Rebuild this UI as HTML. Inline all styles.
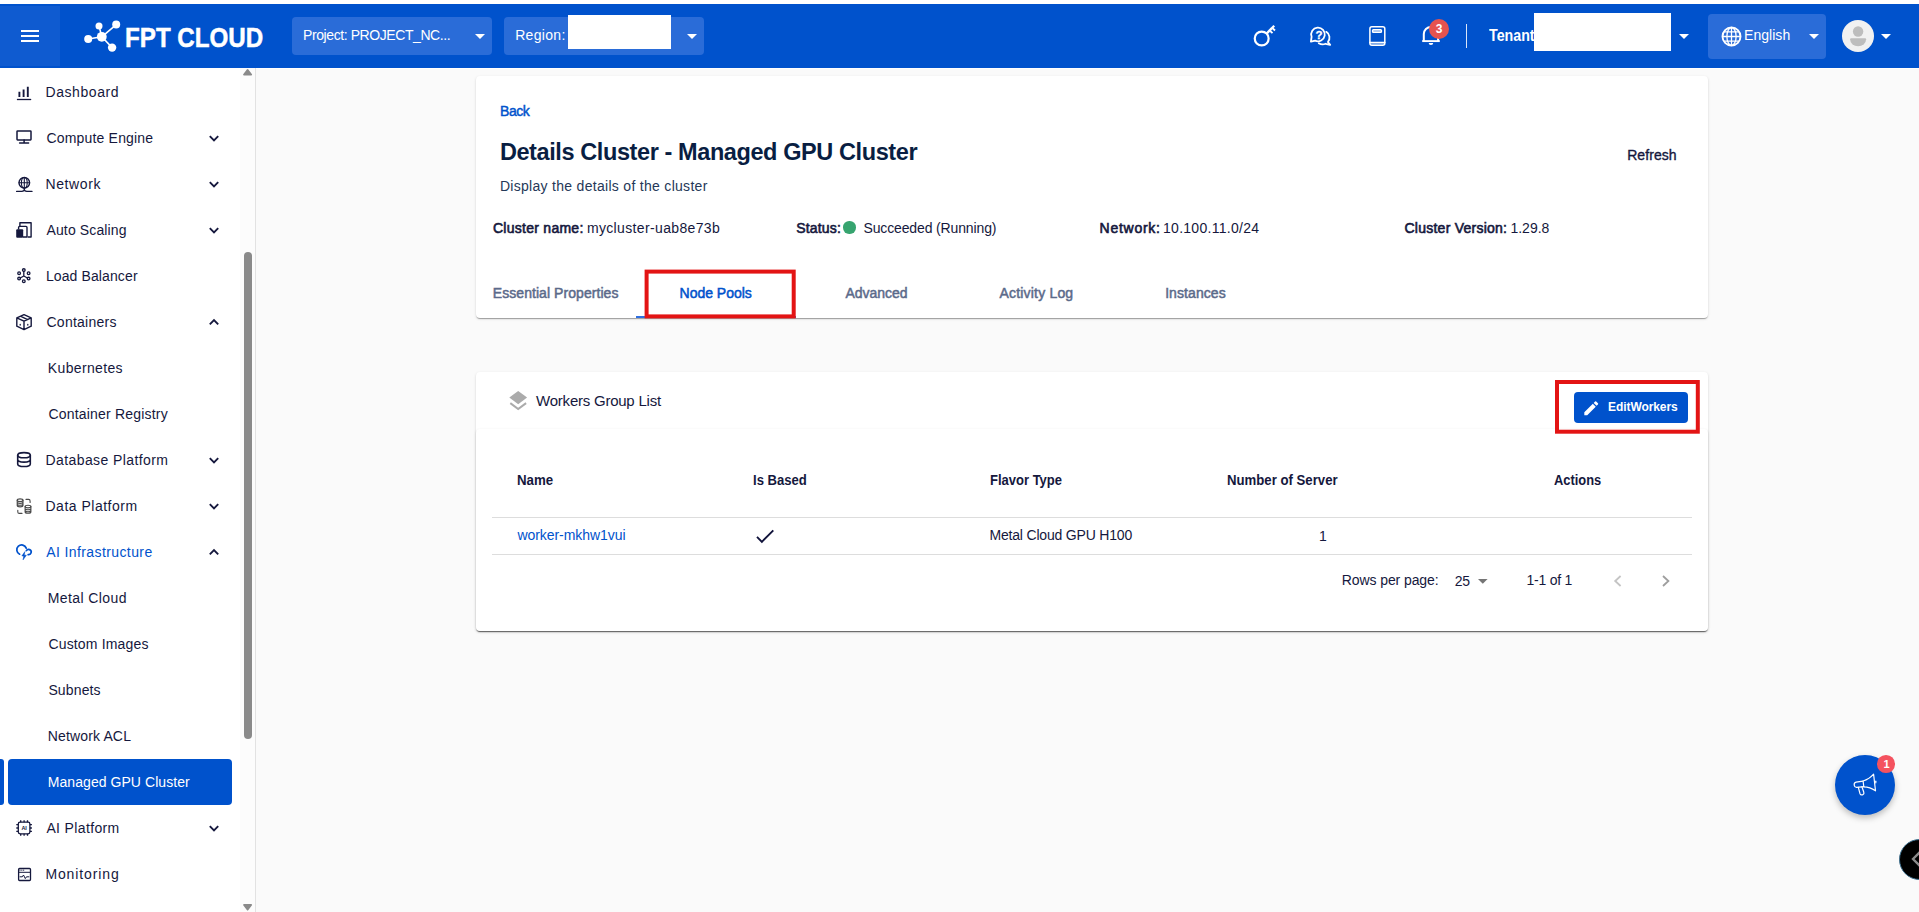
<!DOCTYPE html>
<html lang="en">
<head>
<meta charset="utf-8">
<title>FPT Cloud - Details Cluster - Managed GPU Cluster</title>
<style>
*{box-sizing:border-box;margin:0;padding:0}
html,body{width:1919px;height:912px;overflow:hidden;background:#fff}
body{position:relative;font-family:"Liberation Sans",sans-serif;color:#15183D}
.a{position:absolute}
.t{position:absolute;white-space:nowrap;display:block}
svg{position:absolute;overflow:visible}
#main{left:256px;top:68px;width:1663px;height:844px;background:#FAFAFA}
#hdr{left:0;top:4px;width:1919px;height:64px;background:#0052CC}
#burger{left:0;top:6px;width:60px;height:60px;background:#0F5BD0}
.sel{background:#2A6CD8;border-radius:4px}
.white{background:#fff}
#side{left:0;top:68px;width:255px;height:844px;background:#fff}
#sideb{left:255px;top:68px;width:1px;height:844px;background:#E2E2E2}
.card{background:#fff;border-radius:4px;box-shadow:0 2px 1px -1px rgba(0,0,0,.2),0 1px 1px 0 rgba(0,0,0,.14),0 1px 3px 0 rgba(0,0,0,.12)}
.red{border:3.500px solid #E21A1A}
.ln{background:#DDDDDD;height:1px}
</style>
</head>
<body>
<div class="a" id="main"></div>
<div class="a white" style="left:256px;top:68px;width:1663px;height:1px"></div>

<!-- header -->
<div class="a" id="hdr"></div>
<div class="a" id="burger"></div>
<div class="a white" style="left:21px;top:30px;width:18px;height:2px"></div>
<div class="a white" style="left:21px;top:35px;width:18px;height:2px"></div>
<div class="a white" style="left:21px;top:40px;width:18px;height:2px"></div>
<svg style="left:0;top:0" width="300" height="68" viewBox="0 0 300 68">
 <g stroke="#fff" stroke-width="1.6" fill="#fff">
  <line x1="101.8" y1="36.8" x2="88.2" y2="39"/>
  <line x1="101.8" y1="36.8" x2="99" y2="25.9"/>
  <line x1="101.8" y1="36.8" x2="116.2" y2="24.6"/>
  <line x1="101.8" y1="36.8" x2="112.1" y2="47.6"/>
 </g>
 <g fill="#fff">
  <circle cx="101.8" cy="36.8" r="4.9"/>
  <circle cx="88.2" cy="39" r="4"/>
  <circle cx="99" cy="25.9" r="3.5"/>
  <circle cx="116.2" cy="24.6" r="4"/>
  <circle cx="112.1" cy="47.6" r="4.2"/>
 </g>
</svg>
<div class="a sel" style="left:292px;top:17px;width:200px;height:38px"></div>
<div class="a sel" style="left:504px;top:17px;width:200px;height:38px"></div>
<svg style="left:475px;top:34px" width="10" height="5" viewBox="0 0 10 5"><path d="M0 0h10l-5 5z" fill="#fff"/></svg>
<svg style="left:687px;top:34px" width="10" height="5" viewBox="0 0 10 5"><path d="M0 0h10l-5 5z" fill="#fff"/></svg>

<!-- header right icons -->
<svg style="left:1240px;top:14px" width="240" height="44" viewBox="1240 14 240 44" fill="none" stroke="#fff" stroke-width="1.9" stroke-linecap="round" stroke-linejoin="round">
 <!-- key -->
 <circle cx="1261.700" cy="38.500" r="6.950" stroke-width="2.200"/>
 <path d="M1266.600 33.600L1274.200 25.700" stroke-width="2.300" stroke-linecap="butt"/>
 <path d="M1272.500 28.100l2.500 2.400M1270 30.700l2.500 2.400" stroke-width="1.900" stroke-linecap="butt"/>
 <!-- chat help -->
 <g stroke-width="1.800">
 <path d="M1315.130 40.660A6.800 6.800 0 1 0 1311.600 36.800L1310.900 41.700Z"/>
 <path d="M1326.300 31.830A6.800 6.800 0 0 1 1327.900 41.970L1330.200 44.900L1325.570 43.760A6.800 6.800 0 0 1 1318.800 43.170"/>
 </g>
 <!-- book -->
 <g stroke-width="1.500">
 <rect x="1369.900" y="26.700" width="14.900" height="18.500" rx="2"/>
 <path d="M1369.900 42.500h14.900"/>
 <rect x="1372.600" y="29.700" width="8.800" height="2.500" rx=".8" fill="rgba(255,255,255,.4)"/>
 <rect x="1370.600" y="43.200" width="13.500" height="1.300" fill="rgba(255,255,255,.45)" stroke="none"/>
 </g>
 <!-- bell -->
 <path d="M1423.800 41.100V34A7.150 7.150 0 0 1 1438.100 34V41.100" stroke-width="2" stroke-linecap="butt"/>
 <path d="M1422.200 41.100H1439.800" stroke-width="1.900" stroke-linecap="butt"/>
 <path d="M1428.700 42.900h4.500a2.250 2.100 0 0 1-4.500 0z" fill="#fff" stroke="none"/>
</svg>
<div class="a" style="left:1429.030px;top:19.030px;width:20px;height:20px;border-radius:50%;background:#E5534F"></div>
<div class="a white" style="left:1465.700px;top:24px;width:1.600px;height:24px;opacity:.85"></div>
<svg style="left:1678.700px;top:34px" width="10" height="5" viewBox="0 0 10 5"><path d="M0 0h10l-5 5z" fill="#fff"/></svg>

<div class="a sel" style="left:1708px;top:14px;width:118px;height:45px"></div>
<svg style="left:1721.300px;top:25.500px" width="21" height="21" viewBox="0 0 21 21" fill="none" stroke="#fff" stroke-width="1.900">
 <circle cx="10.500" cy="10.500" r="9"/>
 <ellipse cx="10.500" cy="10.500" rx="4.600" ry="9" stroke-width="1.300"/>
 <path d="M1.500 10.500h18M10.500 1.500v18M3 5.800h15M3 15.200h15" stroke-width="1.300"/>
</svg>
<svg style="left:1809px;top:34px" width="10" height="5" viewBox="0 0 10 5"><path d="M0 0h10l-5 5z" fill="#fff"/></svg>
<svg style="left:1841.800px;top:19.900px" width="32" height="32" viewBox="0 0 32 32">
 <circle cx="16" cy="16" r="16" fill="#F1F1F1"/>
 <circle cx="16.100" cy="11.500" r="5.200" fill="#BDBDBD"/>
 <path d="M8.100 19.200a1 1 0 0 1 1-1h14a1 1 0 0 1 1 1a8 7 0 0 1-16 0z" fill="#BDBDBD"/>
</svg>
<svg style="left:1881px;top:34px" width="10" height="5" viewBox="0 0 10 5"><path d="M0 0h10l-5 5z" fill="#fff"/></svg>

<!-- sidebar -->
<div class="a" id="side"></div>
<div class="a" id="sideb"></div>
<div class="a" style="left:240px;top:68px;width:15px;height:844px;background:#FCFCFC"></div>
<div class="a" style="left:243.500px;top:252px;width:8.500px;height:487px;border-radius:4.500px;background:#8A8A8A"></div>
<svg style="left:242.900px;top:69.300px" width="9.200" height="6.400" viewBox="0 0 9.200 6.400"><path d="M.9 6.400h7.400a.8.8 0 0 0 .7-1.200l-3.600-4.700a1 1 0 0 0-1.600 0l-3.600 4.700a.8.800 0 0 0 .7 1.200z" fill="#8A8A8A"/></svg>
<svg style="left:242.700px;top:904px" width="9.200" height="6.400" viewBox="0 0 9.200 6.400"><path d="M.9 0h7.400a.8.8 0 0 1 .7 1.200l-3.600 4.700a1 1 0 0 1-1.600 0l-3.600-4.700a.8.800 0 0 1 .7-1.200z" fill="#8A8A8A"/></svg>
<div class="a" style="left:0;top:759px;width:4px;height:46px;border-radius:0 3px 3px 0;background:#0052CC"></div>
<div class="a" style="left:8px;top:759px;width:224px;height:46px;border-radius:4px;background:#0052CC"></div>

<!-- sidebar icons -->
<svg style="left:0;top:68px" width="40" height="844" viewBox="0 68 40 844" fill="none" stroke="#15183D" stroke-width="1.500" stroke-linecap="round" stroke-linejoin="round">
 <!-- dashboard -->
 <g stroke-linecap="butt" stroke-width="1.900">
  <path d="M19.400 97v-5.200M23.600 97v-7.500M27.800 97v-10.300"/>
  <path d="M16.900 99.500h14.300" stroke-width="1.300"/>
 </g>
 <!-- compute -->
 <rect x="17" y="131" width="14" height="8.900" rx=".6"/>
 <path d="M24.100 140v2.800M19.600 143h9"/>
 <!-- network -->
 <circle cx="24.300" cy="182.800" r="5.300" stroke-width="1.400"/>
 <ellipse cx="24.300" cy="182.800" rx="2.900" ry="5.300" stroke-width="1.100"/>
 <path d="M19 182.800h10.600M24.300 177.500v10.600" stroke-width="1.100"/>
 <path d="M24.300 188.100v1.500M16.600 191.400h5.200c1.600 0 2.500-.6 2.500-1.800c0 1.200.9 1.800 2.500 1.800h5.200" stroke-width="1.300"/>
 <!-- auto scaling -->
 <path d="M19.900 226v-3.300h11.200v14.300h-3.400" stroke-width="1.400" stroke-linecap="butt"/>
 <path d="M18.600 229.500v-2.100a1 1 0 0 1 1-1h6.400a1 1 0 0 1 1 1v9.600h-4" stroke-width="1.400" stroke-linecap="butt"/>
 <rect x="16.200" y="229.200" width="7" height="8.500" rx="1" fill="#15183D" stroke="none"/>
 <!-- load balancer -->
 <g stroke-width="1.300">
  <circle cx="23.800" cy="270.100" r="1.350"/>
  <circle cx="19.100" cy="273.300" r="1.350"/>
  <circle cx="28.600" cy="273.300" r="1.350"/>
  <circle cx="19.100" cy="278.600" r="1.350"/>
  <circle cx="28.600" cy="278.600" r="1.350"/>
  <circle cx="23.800" cy="281.200" r="1.350"/>
  <path d="M23.800 271.400v4.600M23.800 276l-3.600 2M23.800 276l3.600 2" stroke-width="1.300"/>
 </g>
 <!-- containers -->
 <path d="M24 314.600l7.200 3.300v8.300l-7.200 3.400-7.200-3.400v-8.300zM16.800 317.900l7.200 3.300 7.200-3.300M24 321.200v8.400M20.400 316.200l7.200 3.400" stroke-width="1.400"/>
 <path d="M20.200 324.400v.6M27.800 324.400v.6" stroke-width="1.300"/>
 <!-- database -->
 <g stroke-width="1.600">
 <ellipse cx="24" cy="455.200" rx="6.300" ry="2.600"/>
 <path d="M17.700 455.200v8.700c0 1.500 2.800 2.600 6.300 2.600s6.300-1.100 6.300-2.600v-8.700M17.700 459.500c0 1.500 2.800 2.600 6.300 2.600s6.300-1.100 6.300-2.600"/>
 </g>
 <!-- data platform -->
 <g stroke="#4A4A4A" stroke-width="1.100">
  <ellipse cx="20.100" cy="500.200" rx="2.900" ry="1.300"/>
  <path d="M17.200 500.200v5.400c0 .7 1.300 1.300 2.900 1.300s2.900-.6 2.900-1.300v-5.400M17.200 502.100c0 .7 1.300 1.300 2.900 1.300s2.900-.6 2.900-1.300M17.200 504c0 .7 1.300 1.300 2.900 1.300s2.900-.6 2.900-1.300"/>
  <ellipse cx="28" cy="506.600" rx="2.900" ry="1.300"/>
  <path d="M25.100 506.600v5.400c0 .7 1.300 1.300 2.900 1.300s2.900-.6 2.900-1.300v-5.400M25.100 508.500c0 .7 1.300 1.300 2.900 1.300s2.900-.6 2.900-1.300M25.100 510.400c0 .7 1.300 1.300 2.900 1.300s2.900-.6 2.900-1.300"/>
  <path d="M26 499.400h2.600a1.500 1.500 0 0 1 1.500 1.500v1.600M22 513.400h-2.700a1.500 1.500 0 0 1-1.500-1.500v-1.700"/>
 </g>
 <!-- AI infrastructure -->
 <g stroke="#0052CC" stroke-width="1.700">
  <path d="M19.620 554.200A4.850 4.850 0 1 1 26.230 548.140"/>
  <path d="M26.350 550.700A2.600 2.600 0 1 1 28.150 554.560"/>
  <path d="M24.700 551.900L21.900 555.900H23.800L23.100 559.800L26.300 555.200H24.300Z" fill="#0052CC" stroke="#0052CC" stroke-width=".6"/>
 </g>
 <!-- AI platform -->
 <g stroke-width="1.300" stroke-linecap="butt">
  <rect x="18.300" y="822.200" width="11.600" height="11.600" rx="1.800"/>
  <path d="M20.700 820.200v2M24.100 820.200v2M27.500 820.200v2M20.700 833.800v2M24.100 833.800v2M27.500 833.800v2M16.300 824.600h2M16.300 828h2M16.300 831.400h2M29.900 824.600h2M29.900 828h2M29.900 831.400h2"/>
 </g>
 <!-- monitoring -->
 <g stroke-width="1.300">
  <rect x="18.600" y="868.500" width="11.900" height="12" rx="1"/>
  <path d="M18.600 872.300h11.900M20 876.800h2.300l1.200-1.800 1.800 3.600 1.200-1.800h2.400" stroke-width="1"/>
  <path d="M19.800 870.200h.400M21.600 870.200h.400M23.400 870.200h.4" stroke-width=".9"/>
 </g>
</svg>
<span class="t" style="left:21.400px;top:824.300px;font-size:5.500px;line-height:8px;font-weight:700;color:#15183D;letter-spacing:-.2px">AI</span>

<!-- sidebar chevrons -->
<svg style="left:0;top:68px" width="240" height="844" viewBox="0 68 240 844" fill="none" stroke="#15183D" stroke-width="1.900" stroke-linejoin="miter">
 <path d="M209.800 136.200l4.200 4.200 4.200-4.200"/>
 <path d="M209.800 182.200l4.200 4.200 4.200-4.200"/>
 <path d="M209.800 228.200l4.200 4.200 4.200-4.200"/>
 <path d="M209.800 324.400l4.200-4.200 4.200 4.200"/>
 <path d="M209.800 458.200l4.200 4.200 4.200-4.200"/>
 <path d="M209.800 504.200l4.200 4.200 4.200-4.200"/>
 <path d="M209.800 554.400l4.200-4.200 4.200 4.200"/>
 <path d="M209.800 826.200l4.200 4.200 4.200-4.200"/>
</svg>

<!-- card 1 -->
<div class="a card" style="left:476px;top:76px;width:1232px;height:242px"></div>
<div class="a" style="left:843.200px;top:221.400px;width:12.400px;height:12.400px;border-radius:50%;background:#36A46F"></div>
<div class="a" style="left:636px;top:316px;width:160px;height:2px;background:#2F6FE0"></div>
<svg style="left:640px;top:265px" width="160" height="58" viewBox="640 265 160 58"><rect x="646.600" y="271.600" width="147.100" height="44.800" fill="none" stroke="#E31414" stroke-width="4"/></svg>

<!-- card 2 -->
<div class="a card" style="left:476px;top:372px;width:1232px;height:259px"></div>
<div class="a card" style="left:476px;top:429px;width:1232px;height:202px"></div>
<svg style="left:508.700px;top:390.600px" width="18.400" height="20" viewBox="0 0 18.400 20">
 <path d="M9.200 0L18.100 6.600 9.200 13.200.3 6.600z" fill="#ABABAB"/>
 <path d="M1.300 12.100l7.900 5.900 7.900-5.900" fill="none" stroke="#ABABAB" stroke-width="2"/>
</svg>
<svg style="left:1550px;top:375px" width="155" height="64" viewBox="1550 375 155 64"><rect x="1557" y="382" width="140.800" height="49.700" fill="none" stroke="#E31414" stroke-width="4"/></svg>
<div class="a" style="left:1574px;top:392px;width:114px;height:31px;border-radius:4px;background:#0052CC"></div>
<svg style="left:1581.650px;top:398.850px" width="18.500" height="18.500" viewBox="0 0 24 24"><path d="M3 17.250V21h3.750L17.810 9.940l-3.750-3.750L3 17.250zM20.710 7.040a1 1 0 0 0 0-1.410l-2.340-2.340a1 1 0 0 0-1.410 0l-1.830 1.830 3.750 3.750 1.830-1.830z" fill="#fff"/></svg>
<div class="a ln" style="left:492px;top:517px;width:1200px"></div>
<div class="a ln" style="left:492px;top:554px;width:1200px"></div>
<svg style="left:755px;top:528px" width="22" height="17" viewBox="755 528 22 17"><path d="M757 536.900L761.900 541.800L773.300 530.300" fill="none" stroke="#10123A" stroke-width="1.900"/></svg>
<svg style="left:1478.300px;top:579.200px" width="9.600" height="4.800" viewBox="0 0 10 5"><path d="M0 0h10l-5 5z" fill="#757575"/></svg>
<svg style="left:1610px;top:572px" width="64" height="18" viewBox="1610 572 64 18" fill="none" stroke-width="1.800">
 <path d="M1620.600 576l-5.400 5 5.400 5" stroke="#C4C4C4"/>
 <path d="M1663 576l5.400 5-5.400 5" stroke="#9E9E9E"/>
</svg>

<!-- floating -->
<div class="a" style="left:1834.800px;top:754.800px;width:60px;height:60px;border-radius:50%;background:#0052CC;box-shadow:0 3px 6px rgba(0,0,0,.25)"></div>
<svg style="left:1850px;top:770px" width="30" height="30" viewBox="1850 770 30 30" fill="none" stroke="#fff" stroke-width="1.200" stroke-linejoin="round" stroke-linecap="round">
 <path d="M1873.600 774.200l1.900 16.600c-3.700-2.600-7.500-3.900-11.700-4l-.7-5.800c3.900-1.100 7.500-3.400 10.500-6.800z"/>
 <path d="M1863 781.100l-6.900 1.100c-1.400.3-2.100 1.400-1.900 2.900.3 1.600 1.200 2.500 2.700 2.300l7-.7"/>
 <path d="M1858.300 787.300l1.700 6.400c.6 1.200 1.700 1.400 2.800 1 1-.5 1.400-1.400 1-2.500l-1.900-5.400"/>
 <path d="M1875.800 781.200v1.600"/>
</svg>
<div class="a" style="left:1877.100px;top:755px;width:17.600px;height:17.600px;border-radius:50%;background:#F4525F"></div>
<div class="a" style="left:1899.400px;top:838.500px;width:41px;height:41px;border-radius:50%;background:#000;border:1px solid #3D6F8E"></div>
<svg style="left:1905px;top:848px" width="14" height="22" viewBox="1905 848 14 22" fill="none" stroke="#8C8C8C" stroke-width="2.300"><path d="M1921 851l-8 8 8 8"/></svg>

<!-- redaction boxes -->
<span class="t" style="left:45.50px;top:82.00px;font-size:14px;line-height:20px;color:#15183D;letter-spacing:0.562px;">Dashboard</span>
<span class="t" style="left:46.50px;top:128.00px;font-size:14px;line-height:20px;color:#15183D;letter-spacing:0.177px;">Compute Engine</span>
<span class="t" style="left:45.50px;top:174.00px;font-size:14px;line-height:20px;color:#15183D;letter-spacing:0.609px;">Network</span>
<span class="t" style="left:46.50px;top:220.00px;font-size:14px;line-height:20px;color:#15183D;letter-spacing:0.125px;">Auto Scaling</span>
<span class="t" style="left:45.90px;top:266.00px;font-size:14px;line-height:20px;color:#15183D;letter-spacing:0.114px;">Load Balancer</span>
<span class="t" style="left:46.50px;top:312.00px;font-size:14px;line-height:20px;color:#15183D;letter-spacing:0.244px;">Containers</span>
<span class="t" style="left:47.80px;top:358.00px;font-size:14px;line-height:20px;color:#15183D;letter-spacing:0.355px;">Kubernetes</span>
<span class="t" style="left:48.40px;top:404.00px;font-size:14px;line-height:20px;color:#15183D;letter-spacing:0.198px;">Container Registry</span>
<span class="t" style="left:45.50px;top:450.00px;font-size:14px;line-height:20px;color:#15183D;letter-spacing:0.407px;">Database Platform</span>
<span class="t" style="left:45.50px;top:496.00px;font-size:14px;line-height:20px;color:#15183D;letter-spacing:0.498px;">Data Platform</span>
<span class="t" style="left:46.20px;top:542.00px;font-size:14px;line-height:20px;color:#0052CC;letter-spacing:0.400px;">AI Infrastructure</span>
<span class="t" style="left:47.80px;top:588.00px;font-size:14px;line-height:20px;color:#15183D;letter-spacing:0.398px;">Metal Cloud</span>
<span class="t" style="left:48.40px;top:634.00px;font-size:14px;line-height:20px;color:#15183D;letter-spacing:0.172px;">Custom Images</span>
<span class="t" style="left:48.40px;top:680.00px;font-size:14px;line-height:20px;color:#15183D;letter-spacing:0.138px;">Subnets</span>
<span class="t" style="left:47.80px;top:726.00px;font-size:14px;line-height:20px;color:#15183D;letter-spacing:0.142px;">Network ACL</span>
<span class="t" style="left:47.80px;top:772.00px;font-size:14px;line-height:20px;color:#FFFFFF;letter-spacing:0.057px;">Managed GPU Cluster</span>
<span class="t" style="left:46.40px;top:818.00px;font-size:14px;line-height:20px;color:#15183D;letter-spacing:0.362px;">AI Platform</span>
<span class="t" style="left:45.40px;top:864.00px;font-size:14px;line-height:20px;color:#15183D;letter-spacing:0.880px;">Monitoring</span>
<span class="t" style="left:125.19px;top:18.10px;font-size:28px;line-height:40px;font-weight:700;color:#FFFFFF;letter-spacing:0.000px;transform:scaleX(0.8630);transform-origin:0 50%;-webkit-text-stroke:0.5px #FFFFFF;">FPT CLOUD</span>
<span class="t" style="left:303.10px;top:25.10px;font-size:14px;line-height:20px;color:#FFFFFF;letter-spacing:-0.423px;">Project: PROJECT_NC...</span>
<span class="t" style="left:515.20px;top:25.10px;font-size:14px;line-height:20px;color:#FFFFFF;letter-spacing:0.306px;">Region:</span>
<span class="t" style="left:1489.00px;top:25.90px;font-size:16px;line-height:20px;font-weight:700;color:#FFFFFF;letter-spacing:0.000px;transform:scaleX(0.8897);transform-origin:0 50%;">Tenant</span>
<span class="t" style="left:1744.00px;top:25.30px;font-size:14px;line-height:20px;color:#FFFFFF;letter-spacing:0.045px;">English</span>
<span class="t" style="left:500.12px;top:100.60px;font-size:14px;line-height:20px;color:#0052CC;letter-spacing:-0.491px;-webkit-text-stroke:0.45px #0052CC;">Back</span>
<span class="t" style="left:499.90px;top:132.00px;font-size:23.5px;line-height:40px;font-weight:700;color:#091E42;letter-spacing:-0.405px;">Details Cluster - Managed GPU Cluster</span>
<span class="t" style="left:499.90px;top:175.70px;font-size:14px;line-height:20px;color:#253858;letter-spacing:0.297px;">Display the details of the cluster</span>
<span class="t" style="left:1627.17px;top:145.00px;font-size:14px;line-height:20px;color:#15183D;letter-spacing:0.069px;-webkit-text-stroke:0.35px #15183D;">Refresh</span>
<span class="t" style="left:493.00px;top:218.20px;font-size:14px;line-height:20px;color:#15183D;letter-spacing:0.262px;-webkit-text-stroke:0.6px #15183D;">Cluster name:</span>
<span class="t" style="left:586.90px;top:218.20px;font-size:14px;line-height:20px;color:#15183D;letter-spacing:0.355px;">mycluster-uab8e73b</span>
<span class="t" style="left:796.30px;top:218.20px;font-size:14px;line-height:20px;color:#15183D;letter-spacing:0.152px;-webkit-text-stroke:0.6px #15183D;">Status:</span>
<span class="t" style="left:863.50px;top:218.20px;font-size:14px;line-height:20px;color:#15183D;letter-spacing:-0.137px;">Succeeded (Running)</span>
<span class="t" style="left:1099.60px;top:218.20px;font-size:14px;line-height:20px;color:#15183D;letter-spacing:0.722px;-webkit-text-stroke:0.6px #15183D;">Network:</span>
<span class="t" style="left:1163.00px;top:218.20px;font-size:14px;line-height:20px;color:#15183D;letter-spacing:0.277px;">10.100.11.0/24</span>
<span class="t" style="left:1404.50px;top:218.20px;font-size:14px;line-height:20px;color:#15183D;letter-spacing:0.245px;-webkit-text-stroke:0.6px #15183D;">Cluster Version:</span>
<span class="t" style="left:1510.40px;top:218.20px;font-size:14px;line-height:20px;color:#15183D;letter-spacing:0.012px;">1.29.8</span>
<span class="t" style="left:492.75px;top:283.00px;font-size:14px;line-height:20px;color:#5B6A8A;letter-spacing:0.063px;-webkit-text-stroke:0.5px #5B6A8A;">Essential Properties</span>
<span class="t" style="left:679.55px;top:283.00px;font-size:14px;line-height:20px;color:#0052CC;letter-spacing:-0.009px;-webkit-text-stroke:0.5px #0052CC;">Node Pools</span>
<span class="t" style="left:845.45px;top:283.00px;font-size:14px;line-height:20px;color:#5B6A8A;letter-spacing:-0.012px;-webkit-text-stroke:0.5px #5B6A8A;">Advanced</span>
<span class="t" style="left:999.55px;top:283.00px;font-size:14px;line-height:20px;color:#5B6A8A;letter-spacing:0.182px;-webkit-text-stroke:0.5px #5B6A8A;">Activity Log</span>
<span class="t" style="left:1165.15px;top:283.00px;font-size:14px;line-height:20px;color:#5B6A8A;letter-spacing:0.085px;-webkit-text-stroke:0.5px #5B6A8A;">Instances</span>
<span class="t" style="left:536.10px;top:390.60px;font-size:15px;line-height:20px;color:#15183D;letter-spacing:-0.233px;">Workers Group List</span>
<span class="t" style="left:1608.10px;top:396.70px;font-size:12px;line-height:20px;font-weight:700;color:#FFFFFF;letter-spacing:-0.089px;">EditWorkers</span>
<span class="t" style="left:516.50px;top:470.20px;font-size:14px;line-height:20px;font-weight:700;color:#15183D;letter-spacing:0.000px;transform:scaleX(0.9493);transform-origin:0 50%;">Name</span>
<span class="t" style="left:753.10px;top:470.20px;font-size:14px;line-height:20px;font-weight:700;color:#15183D;letter-spacing:0.000px;transform:scaleX(0.9345);transform-origin:0 50%;">Is Based</span>
<span class="t" style="left:990.00px;top:470.20px;font-size:14px;line-height:20px;font-weight:700;color:#15183D;letter-spacing:0.000px;transform:scaleX(0.9286);transform-origin:0 50%;">Flavor Type</span>
<span class="t" style="left:1227.10px;top:470.20px;font-size:14px;line-height:20px;font-weight:700;color:#15183D;letter-spacing:0.000px;transform:scaleX(0.9413);transform-origin:0 50%;">Number of Server</span>
<span class="t" style="left:1553.70px;top:470.20px;font-size:14px;line-height:20px;font-weight:700;color:#15183D;letter-spacing:0.000px;transform:scaleX(0.9195);transform-origin:0 50%;">Actions</span>
<span class="t" style="left:517.50px;top:525.00px;font-size:14px;line-height:20px;color:#0052CC;letter-spacing:-0.064px;">worker-mkhw1vui</span>
<span class="t" style="left:989.50px;top:525.00px;font-size:14px;line-height:20px;color:#15183D;letter-spacing:-0.190px;">Metal Cloud GPU H100</span>
<span class="t" style="left:1319.00px;top:526.00px;font-size:14px;line-height:20px;color:#15183D;letter-spacing:0.000px;">1</span>
<span class="t" style="left:1341.80px;top:570.10px;font-size:14px;line-height:20px;color:#15183D;letter-spacing:-0.097px;">Rows per page:</span>
<span class="t" style="left:1454.70px;top:571.20px;font-size:14px;line-height:20px;color:#15183D;letter-spacing:-0.286px;">25</span>
<span class="t" style="left:1526.40px;top:570.10px;font-size:14px;line-height:20px;color:#15183D;letter-spacing:-0.213px;">1-1 of 1</span>
<span class="t" style="left:1435.80px;top:19.00px;font-size:12px;line-height:20px;font-weight:700;color:#FFFFFF;letter-spacing:0.000px;">3</span>
<span class="t" style="left:1315.45px;top:24.90px;font-size:11.5px;line-height:20px;font-weight:700;color:#FFFFFF;letter-spacing:0.000px;-webkit-text-stroke:0.3px #FFFFFF;">?</span>
<span class="t" style="left:1883.60px;top:753.60px;font-size:11px;line-height:20px;font-weight:700;color:#FFFFFF;letter-spacing:0.000px;">1</span>
<div class="a white" style="left:568px;top:15.400px;width:103px;height:33.500px"></div>
<div class="a white" style="left:1534.200px;top:13.200px;width:136.800px;height:37.800px"></div>
</body>
</html>
